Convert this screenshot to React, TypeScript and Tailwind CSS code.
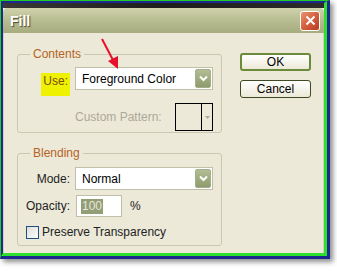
import React from "react";

// XP-style "Fill" dialog with a tutorial arrow and highlight
function ComboArrow() {
  return (
    <div className="w-[16px] h-[19px] rounded-[2px] bg-gradient-to-b from-[#b3bd95] to-[#8e9b6c] border border-[#a4ae88] flex items-center justify-center">
      <svg width="9" height="7" viewBox="0 0 9 7">
        <path d="M1 1.5 L4.5 5 L8 1.5" stroke="#ffffff" strokeWidth="2" fill="none" />
      </svg>
    </div>
  );
}

function Combo({ text }: { text: string }) {
  return (
    <div className="w-[138px] h-[23px] bg-white border border-[#c2bfa9] flex items-center justify-between pl-[6px] pr-[1px]">
      <span className="text-black">{text}</span>
      <ComboArrow />
    </div>
  );
}

export default function App() {
  return (
    <div className="w-[337px] h-[271px] bg-white overflow-hidden" style={{ fontFamily: '"Liberation Sans", Arial, sans-serif' }}>
      <div className="relative w-[330px] h-[259px] border-t border-l border-r-[3px] border-b-[3px] border-t-[#22cc22] border-l-[#22cc22] border-r-[#1c2a90] border-b-[#1c2a90] shadow-[3px_3px_5px_rgba(0,0,0,0.45)]">
        <div className="w-full h-full border-t-2 border-l-2 border-r-[3px] border-b-[3px] border-t-[#1c2a90] border-l-[#1c2a90] border-r-[#2ee02e] border-b-[#2ee02e] flex flex-col text-[12px] leading-[14px]">
          {/* photo behind the dialog */}
          <div className="h-[5px] bg-gradient-to-r from-[#3a3934] via-[#1e1d1a] to-[#2d2c28]" />

          {/* title bar */}
          <div className="h-[25px] bg-gradient-to-b from-[#d0d3ad] via-[#b7bc91] to-[#a7ac7f] flex items-center justify-between pl-[7px] pr-[4px] rounded-t-[4px]">
            <span className="text-white font-bold text-[14px] [text-shadow:1px_1px_1px_#4a4a30]">Fill</span>
            <div className="w-[20px] h-[20px] rounded-[3px] border border-white bg-gradient-to-br from-[#e89272] via-[#d4603e] to-[#b83a1c] flex items-center justify-center">
              <svg width="11" height="11" viewBox="0 0 11 11">
                <path d="M1.5 1.5 L9.5 9.5 M9.5 1.5 L1.5 9.5" stroke="#ffffff" strokeWidth="2" />
              </svg>
            </div>
          </div>

          {/* body */}
          <div className="flex-1 bg-[#ece9d8] border-x border-[#d3d0bc] flex pl-[13px] pt-[14px] gap-[18px]">
            <div className="w-[205px] flex flex-col gap-[13px]">
              <fieldset className="h-[86px] border border-[#cac7b3] rounded-[3px] px-0">
                <legend className="ml-[12px] px-[3px] text-[#b5631f]">Contents</legend>
                <div className="flex items-start mt-[6px]">
                  <div className="w-[57px] flex justify-end pr-[5px]">
                    <span className="mt-[6px] bg-[#eef200] px-[2px] pt-[1px] pb-[8px] text-[#7a4d14]">Use:</span>
                  </div>
                  <Combo text="Foreground Color" />
                </div>
                <div className="flex items-center mt-[7px] pl-[57px]">
                  <span className="text-[#aca899] w-[100px]">Custom Pattern:</span>
                  <div className="w-[38px] h-[28px] border border-black bg-[#ece9d8] flex justify-end">
                    <div className="w-[11px] h-full border-l border-black flex items-center justify-center">
                      <svg width="5" height="3" viewBox="0 0 5 3">
                        <path d="M0 0 L5 0 L2.5 3 Z" fill="#a9a79b" />
                      </svg>
                    </div>
                  </div>
                </div>
              </fieldset>

              <fieldset className="h-[100px] border border-[#cac7b3] rounded-[3px] px-0">
                <legend className="ml-[12px] px-[3px] text-[#b5631f]">Blending</legend>
                <div className="flex items-center mt-[7px]">
                  <span className="w-[57px] text-right pr-[5px] text-[#222]">Mode:</span>
                  <Combo text="Normal" />
                </div>
                <div className="flex items-center mt-[5px]">
                  <span className="w-[58px] text-right pr-[6px] text-[#222]">Opacity:</span>
                  <div className="w-[46px] h-[22px] bg-white border border-[#c2bfa9] flex items-center pl-[4px]">
                    <span className="bg-[#929e76] text-[#e6e6da] px-[1px] leading-[15px]">100</span>
                  </div>
                  <span className="ml-[8px] text-[#222]">%</span>
                </div>
                <div className="flex items-center mt-[8px] pl-[8px] gap-[3px]">
                  <div className="w-[13px] h-[13px] border border-[#1c5180] bg-gradient-to-br from-[#dcdcd7] to-[#ffffff]" />
                  <span className="text-[#222]">Preserve Transparency</span>
                </div>
              </fieldset>
            </div>

            <div className="w-[71px] flex flex-col gap-[9px] mt-[6px]">
              <div className="h-[18px] rounded-[3px] border-2 border-[#6b8a3a] bg-gradient-to-b from-white to-[#ece9d8] flex items-center justify-center text-black">
                OK
              </div>
              <div className="h-[18px] rounded-[3px] border border-[#3e4a22] bg-gradient-to-b from-white to-[#ece9d8] flex items-center justify-center text-black">
                Cancel
              </div>
            </div>
          </div>
        </div>

        {/* red tutorial arrow */}
        <svg className="absolute left-0 top-0" width="337" height="271" viewBox="0 0 337 271">
          <line x1="101" y1="38" x2="112" y2="59" stroke="#e8102a" strokeWidth="2" />
          <polygon points="117,68 107,60 117,55" fill="#e8102a" />
        </svg>
      </div>
    </div>
  );
}
